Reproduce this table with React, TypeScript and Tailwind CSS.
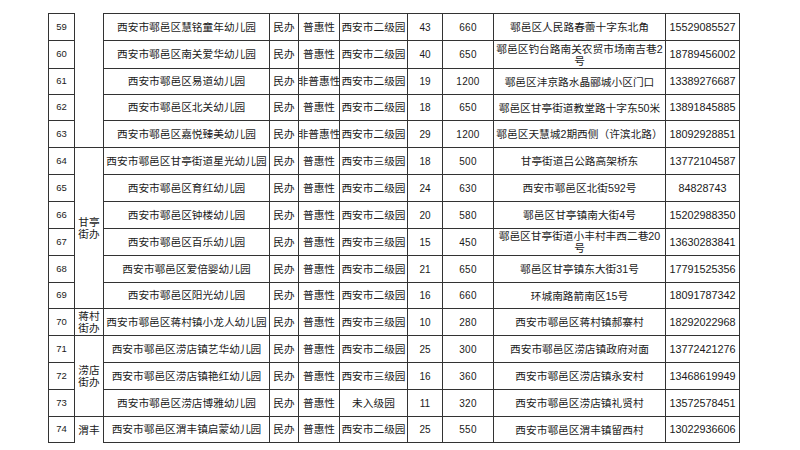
const rows = [
    { no: 59, name: "西安市鄠邑区慧铭童年幼儿园", kind: "普惠性", level: "西安市二级园", classes: "43", cap: "660", addr: "鄠邑区人民路春蕾十字东北角", tel: "15529085527", h: "h-[27px]" },
    { no: 60, name: "西安市鄠邑区南关爱华幼儿园", kind: "普惠性", level: "西安市二级园", classes: "40", cap: "650", addr: "鄠邑区钓台路南关农贸市场南吉巷2\n号", tel: "18789456002", h: "h-[28px]" },
    { no: 61, name: "西安市鄠邑区易道幼儿园", kind: "非普惠性", level: "西安市二级园", classes: "19", cap: "1200", addr: "鄠邑区沣京路水晶郦城小区门口", tel: "13389276687", h: "h-[26px]" },
    { no: 62, name: "西安市鄠邑区北关幼儿园", kind: "普惠性", level: "西安市二级园", classes: "18", cap: "650", addr: "鄠邑区甘亭街道教堂路十字东50米", tel: "13891845885", h: "h-[26px]" },
    { no: 63, name: "西安市鄠邑区嘉悦臻美幼儿园", kind: "非普惠性", level: "西安市二级园", classes: "29", cap: "1200", addr: "鄠邑区天慧城2期西侧（许滨北路）", tel: "18092928851", h: "h-[27px]" },
    { no: 64, name: "西安市鄠邑区甘亭街道星光幼儿园", kind: "普惠性", level: "西安市三级园", classes: "18", cap: "500", addr: "甘亭街道吕公路高架桥东", tel: "13772104587", h: "h-[27px]" },
    { no: 65, name: "西安市鄠邑区育红幼儿园", kind: "普惠性", level: "西安市二级园", classes: "24", cap: "630", addr: "西安市鄠邑区北街592号", tel: "84828743", h: "h-[27px]" },
    { no: 66, name: "西安市鄠邑区钟楼幼儿园", kind: "普惠性", level: "西安市二级园", classes: "20", cap: "580", addr: "鄠邑区甘亭镇南大街4号", tel: "15202988350", h: "h-[27px]" },
    { no: 67, name: "西安市鄠邑区百乐幼儿园", kind: "普惠性", level: "西安市三级园", classes: "15", cap: "450", addr: "鄠邑区甘亭街道小丰村丰西二巷20\n号", tel: "13630283841", h: "h-[27px]" },
    { no: 68, name: "西安市鄠邑区爱倍婴幼儿园", kind: "普惠性", level: "西安市二级园", classes: "21", cap: "650", addr: "鄠邑区甘亭镇东大街31号", tel: "17791525356", h: "h-[27px]" },
    { no: 69, name: "西安市鄠邑区阳光幼儿园", kind: "普惠性", level: "西安市二级园", classes: "16", cap: "660", addr: "环城南路箭南区15号", tel: "18091787342", h: "h-[26px]" },
    { no: 70, name: "西安市鄠邑区蒋村镇小龙人幼儿园", kind: "普惠性", level: "西安市三级园", classes: "10", cap: "280", addr: "西安市鄠邑区蒋村镇郝寨村", tel: "18292022968", h: "h-[27px]" },
    { no: 71, name: "西安市鄠邑区涝店镇艺华幼儿园", kind: "普惠性", level: "西安市二级园", classes: "25", cap: "300", addr: "西安市鄠邑区涝店镇政府对面", tel: "13772421276", h: "h-[27px]" },
    { no: 72, name: "西安市鄠邑区涝店镇艳红幼儿园", kind: "普惠性", level: "西安市三级园", classes: "16", cap: "360", addr: "西安市鄠邑区涝店镇永安村", tel: "13468619949", h: "h-[27px]" },
    { no: 73, name: "西安市鄠邑区涝店博雅幼儿园", kind: "普惠性", level: "未入级园", classes: "11", cap: "320", addr: "西安市鄠邑区涝店镇礼贤村", tel: "13572578451", h: "h-[27px]" },
    { no: 74, name: "西安市鄠邑区渭丰镇启蒙幼儿园", kind: "普惠性", level: "西安市二级园", classes: "25", cap: "550", addr: "西安市鄠邑区渭丰镇留西村", tel: "13022936606", h: "h-[26px]" },
];

// merged 街办 cells, keyed by the row they start on
const districts: Record<number, { span: number; text: string; className: string }> = {
    59: { span: 5, text: "", className: "border-t-0" },
    64: { span: 6, text: "甘亭\n街办", className: "align-middle" },
    70: { span: 1, text: "蒋村\n街办", className: "align-middle" },
    71: { span: 3, text: "涝店\n街办", className: "align-middle" },
    74: { span: 1, text: "渭丰", className: "border-b-0 align-bottom pb-0" },
};

const cell = "border border-[#333] p-0 text-center align-middle overflow-hidden";

function Fit({ children, className = "" }: { children: React.ReactNode; className?: string }) {
    return <div className={`flex items-center justify-center whitespace-nowrap ${className}`}>{children}</div>;
}

export default function App() {
    return (
        <div className="w-[800px] h-[450px] bg-white overflow-hidden pt-[13px] pl-[48px] text-[#1a1a1a] font-['Liberation_Sans','Noto_Sans_CJK_SC',sans-serif]">
            <table className="table-fixed border-collapse w-[691px]">
                <colgroup>
                    <col className="w-[26px]" />
                    <col className="w-[29px]" />
                    <col className="w-[166px]" />
                    <col className="w-[29px]" />
                    <col className="w-[41px]" />
                    <col className="w-[68px]" />
                    <col className="w-[35px]" />
                    <col className="w-[51px]" />
                    <col className="w-[172px]" />
                    <col className="w-[74px]" />
                </colgroup>
                <tbody>
                    {rows.map((r) => {
                        const d = districts[r.no];
                        return (
                            <tr key={r.no} className={r.h}>
                                <td className={`${cell} text-[9.5px]`}>{r.no}</td>
                                {d && (
                                    <td rowSpan={d.span} className={`${cell} ${d.className} text-[10.7px] leading-[12px] whitespace-pre-line`}>
                                        {d.text}
                                    </td>
                                )}
                                <td className={`${cell} text-[10.7px]`}>
                                    <Fit>{r.name}</Fit>
                                </td>
                                <td className={`${cell} text-[10.7px]`}>
                                    <Fit>民办</Fit>
                                </td>
                                <td className={`${cell} text-[10.7px]`}>
                                    <Fit>{r.kind}</Fit>
                                </td>
                                <td className={`${cell} text-[10.7px]`}>
                                    <Fit>{r.level}</Fit>
                                </td>
                                <td className={`${cell} text-[10px]`}>{r.classes}</td>
                                <td className={`${cell} text-[10px] tracking-[0.3px]`}>{r.cap}</td>
                                <td className={`${cell} text-[10.7px] leading-[12px] whitespace-pre-line`}>{r.addr}</td>
                                <td className={`${cell} text-[10.8px]`}>{r.tel}</td>
                            </tr>
                        );
                    })}
                </tbody>
            </table>
        </div>
    );
}
